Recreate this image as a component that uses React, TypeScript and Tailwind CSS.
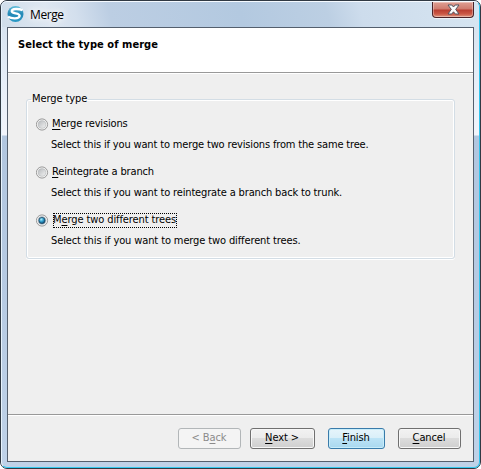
import React from "react";

type Choice = { before: string; key: string; after: string; note: string; width: string; spacing: string; noteSpacing: string; selected?: boolean };

const choices: Choice[] = [
  { before: "", key: "M", after: "erge revisions", note: "Select this if you want to merge two revisions from the same tree.", width: "w-[77px]", spacing: "tracking-[-0.16px]", noteSpacing: "tracking-[-0.16px]" },
  { before: "", key: "R", after: "eintegrate a branch", note: "Select this if you want to reintegrate a branch back to trunk.", width: "w-[104px]", spacing: "tracking-[-0.13px]", noteSpacing: "tracking-[-0.15px]" },
  { before: "M", key: "e", after: "rge two different trees", note: "Select this if you want to merge two different trees.", width: "w-[124px]", spacing: "tracking-[-0.1px]", noteSpacing: "tracking-[-0.12px]", selected: true },
];

function Key({ children }: { children: React.ReactNode }) {
  return <span className="underline decoration-1 underline-offset-[2px] [text-decoration-skip-ink:none]">{children}</span>;
}

function Radio({ selected }: { selected?: boolean }) {
  return (
    <svg className="h-[13px] w-[13px] shrink-0" viewBox="0 0 13 13">
      <defs>
        <linearGradient id="dish" x1="0" y1="0" x2="1" y2="1"><stop stopColor="#b5b8bb" /><stop offset="1" stopColor="#f4f4f4" /></linearGradient>
        <radialGradient id="dot" cx=".38" cy=".32" r=".7"><stop stopColor="#b4eefb" /><stop offset=".45" stopColor="#38a7d4" /><stop offset="1" stopColor="#0b4872" /></radialGradient>
      </defs>
      <circle cx="6" cy="6.5" r="5.6" fill="#f4f4f4" stroke="#8e8f8f" strokeWidth=".9" />
      <circle cx="6" cy="6.5" r="3.9" fill="url(#dish)" stroke={selected ? "#8fa5b4" : "#b5b8bb"} strokeWidth=".6" />
      {selected && <circle cx="6" cy="6.5" r="3.1" fill="url(#dot)" stroke="#123e5a" strokeWidth=".7" />}
    </svg>
  );
}

function Button({ className, children }: { className: string; children: React.ReactNode }) {
  return <button className={"flex h-[21px] items-center justify-center rounded-[3px] border pr-px pb-px tracking-[-0.12px] whitespace-nowrap " + className}>{children}</button>;
}

export default function App() {
  return (
    <div className="h-[469px] w-[481px] bg-white">
      <div className="flex h-[469px] w-[481px] flex-col rounded-[7px] border border-[#303943] bg-[#bcd0e7] font-['DejaVu_Sans_Condensed','DejaVu_Sans',sans-serif] text-[11px] leading-[14px] text-black">
        <div className="flex min-h-0 flex-1 flex-col rounded-[6px] border border-t-[#f5faff] border-r-[#32c5ee] border-b-[#35c9ef] border-l-[#e7f3fd] bg-[linear-gradient(180deg,#c7d7e8_0px,#d8e4f0_27px,#e6eef8_80px,#f1f4fb_133px,#b1c6df_134px,#b7cbe3_300px,#bfd2e8_100%)] px-[5px] pb-[5px]">
          <header className="mx-[-5px] flex h-[25px] shrink-0 justify-between rounded-t-[5px] bg-[linear-gradient(75deg,#cfddea_0%,#dee7f1_10%,#d3dfed_16%,#bccee3_23%,#b3c9e0_50%,#bccfe3_68%,#cddcec_75%,#d6e5f1_100%)] px-[5px]">
            <div className="flex items-start gap-[6px] pt-[3px]">
              <svg className="mt-px h-[16px] w-[17px]" viewBox="0 0 17 16">
                <defs><linearGradient id="logo" x1="0" y1="0" x2="0" y2="1"><stop stopColor="#61bed9" /><stop offset=".5" stopColor="#2388b6" /><stop offset="1" stopColor="#2b9bc6" /></linearGradient></defs>
                <circle cx="8.5" cy="8" r="8" fill="url(#logo)" />
                <path d="M15.6 4.2C12 2.6 4.8 2.4 4.8 5.3 4.8 8 12.8 6.6 12.6 9.8 12.2 13.2 4.6 12.8 1 10.8" fill="none" stroke="white" strokeWidth="2.4" />
              </svg>
              <h1 className="font-['Open_Sans',sans-serif] text-[12px] leading-[19px] tracking-[-0.4px] [text-shadow:0_0_6px_white,0_0_8px_white]">Merge</h1>
            </div>
            <button aria-label="Close" className="flex h-[16px] w-[42px] items-center justify-center rounded-b-[4px] border border-t-0 border-[#4b2328] bg-[linear-gradient(180deg,#df9f93_0px,#cf7b6e_7px,#b93d30_8px,#cb5845_12px,#e09882_100%)] shadow-[inset_0_0_0_1px_#ffffff55,0_1px_0_#edf3f8]">
              <svg width="13" height="11" viewBox="0 0 13 11"><path d="M1 1h3.8l1.7 2L8.2 1H12L8.7 5.4 12 10H8.3L6.5 7.8 4.7 10H1l3.3-4.6z" fill="#fafafa" stroke="#53545f" /></svg>
            </button>
          </header>
          <main className="flex min-h-0 flex-1 flex-col border border-[#545f6d] bg-[#efefef]">
            <section className="h-[45px] shrink-0 border-b border-[#999] bg-white pt-[10px] pl-[10px] font-bold">
              <h2 className="tracking-[0.06px]">Select the type of merge</h2>
            </section>
            <section className="h-[341px] shrink-0 border-t border-white pt-[18px] pl-[18px]">
              <fieldset className="h-[167px] w-[429px] rounded-[3px] border border-[#d3dde5] pl-[9px] shadow-[inset_0_0_0_1px_white,0_1px_0_white]">
                <legend className="ml-[-5px] h-[14px] px-px tracking-[-0.1px]">Merge type</legend>
                <div className="mt-[11px]">
                  {choices.map((c) => (
                    <div key={c.note} className="h-[48px]">
                      <label className="flex h-[14px] items-center gap-[3px]">
                        <Radio selected={c.selected} />
                        <span className={"flex h-[15px] items-center whitespace-nowrap border border-dotted " + c.width + " " + c.spacing + (c.selected ? " ml-px border-black" : " border-transparent")}><span className="-ml-px">{c.before}<Key>{c.key}</Key>{c.after}</span></span>
                      </label>
                      <p className={"mt-[7px] ml-[15px] whitespace-nowrap " + c.noteSpacing}>{c.note}</p>
                    </div>
                  ))}
                </div>
              </fieldset>
            </section>
            <footer className="flex flex-1 border-t border-[#999] pt-[13px] pl-[170px] shadow-[inset_0_1px_0_white]">
              <Button className="w-[63px] border-[#b2b6b8] bg-[#f4f4f4] text-[#8b8b8b]">&lt; B<Key>a</Key>ck</Button>
              <Button className="ml-[9px] w-[65px] border-[#707070] bg-[linear-gradient(180deg,#f2f2f2_0%,#ebebeb_49%,#dcdcdc_50%,#cfcfcf_100%)] shadow-[inset_0_0_0_1px_#f7f7f7]"><span><Key>N</Key>ext &gt;</span></Button>
              <Button className="ml-[13px] w-[57px] border-[#397baa] bg-[linear-gradient(180deg,#e6f4fb_0%,#d9eff9_49%,#bce3f6_50%,#a9d8ef_100%)] shadow-[inset_0_0_0_1px_#c8edfa]"><span><Key>F</Key>inish</span></Button>
              <Button className="ml-[13px] w-[63px] border-[#707070] bg-[linear-gradient(180deg,#f2f2f2_0%,#ebebeb_49%,#dcdcdc_50%,#cfcfcf_100%)] shadow-[inset_0_0_0_1px_#f7f7f7]"><span><Key>C</Key>ancel</span></Button>
            </footer>
          </main>
        </div>
      </div>
    </div>
  );
}
